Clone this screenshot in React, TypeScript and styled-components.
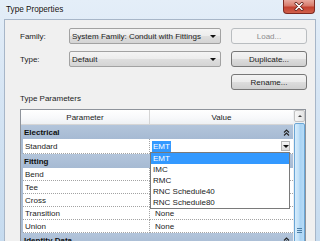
import styled, { createGlobalStyle } from 'styled-components';

const GlobalStyle = createGlobalStyle`
  html, body {
    margin: 0;
    padding: 0;
    background: #ffffff;
  }
  body {
    font-family: "Liberation Sans", Arial, sans-serif;
    font-size: 8px;
    color: #1b1b1b;
  }
`;

const Window = styled.div`
  width: 320px;
  height: 241px;
  overflow: hidden;
  display: flex;
  flex-direction: column;
  background: linear-gradient(180deg, #e4eef8 0%, #d6e5f4 40%, #c6dbef 100%);
`;

const TitleBar = styled.div`
  height: 19px;
  flex: none;
  display: flex;
  align-items: flex-start;
`;

const Title = styled.div`
  padding: 5px 0 0 6px;
  font-size: 8.2px;
  color: #111;
  text-shadow: 0 0 3px #fff;
  flex: 1;
`;

const CloseButton = styled.div`
  width: 32px;
  height: 14px;
  margin-right: 5px;
  box-sizing: border-box;
  border: 1px solid #7d2a22;
  border-top: none;
  border-radius: 0 0 4px 4px;
  background: linear-gradient(180deg, #e8a99e 0%, #d77a6b 45%, #c3402f 55%, #d0614c 100%);
  display: flex;
  align-items: center;
  justify-content: center;
`;

const Panel = styled.div`
  flex: 1;
  margin: 0 4px;
  border: 1px solid #a7b6c8;
  border-bottom: none;
  background: #f0f0f0;
  padding: 8px 8px 0 15px;
  display: flex;
  flex-direction: column;
`;

const FormGrid = styled.div`
  display: grid;
  grid-template-columns: 49px 152px 1fr;
  grid-auto-rows: 16px;
  row-gap: 7px;
  align-items: center;
`;

const Label = styled.div`
  padding-top: 1px;
`;

const Combo = styled.div`
  height: 16px;
  box-sizing: border-box;
  border: 1px solid #a2a2a2;
  border-radius: 2px;
  background: linear-gradient(180deg, #f4f4f4 0%, #ececec 50%, #dedede 51%, #d4d4d4 100%);
  display: flex;
  align-items: center;
  padding: 0 4px 0 2px;
`;

const ComboText = styled.span`
  flex: 1;
  white-space: nowrap;
  overflow: hidden;
`;

const Arrow = styled.span`
  width: 0;
  height: 0;
  border-left: 3px solid transparent;
  border-right: 3px solid transparent;
  border-top: 3px solid #111;
`;

const Button = styled.div<{ $disabled?: boolean }>`
  grid-column: 3;
  justify-self: end;
  width: 76px;
  height: 16px;
  box-sizing: border-box;
  border: 1px solid ${(p) => (p.$disabled ? '#b9bdc0' : '#777')};
  border-radius: 3px;
  background: ${(p) =>
    p.$disabled
      ? '#f4f4f4'
      : 'linear-gradient(180deg, #f3f3f3 0%, #ebebeb 50%, #dddddd 51%, #cfcfcf 100%)'};
  color: ${(p) => (p.$disabled ? '#8d8d8d' : '#1b1b1b')};
  display: flex;
  align-items: center;
  justify-content: center;
`;

const SectionTitle = styled.div`
  margin: 4px 0 5px;
  height: 10px;
  line-height: 10px;
`;

const Table = styled.div`
  width: 286px;
  box-sizing: border-box;
  border: 1px solid #8e939b;
  border-bottom: none;
  background: #fff;
  display: flex;
  flex: 1;
`;

const GridBody = styled.div`
  width: 272px;
  display: flex;
  flex-direction: column;
`;

const HeaderRow = styled.div`
  display: grid;
  grid-template-columns: 129px 143px;
  height: 14px;
  border-bottom: 1px solid #d5d5d5;
  background: linear-gradient(180deg, #ffffff 0%, #f7f8fa 60%, #eef0f3 100%);
`;

const HeaderCell = styled.div<{ $divider?: boolean }>`
  display: flex;
  align-items: center;
  justify-content: center;
  border-right: ${(p) => (p.$divider ? '1px solid #d5d5d5' : 'none')};
`;

const GroupRow = styled.div`
  height: 14px;
  flex: none;
  display: flex;
  align-items: center;
  padding: 0 3px 0 3px;
  background: linear-gradient(180deg, #b3c5db 0%, #a6bad3 100%);
  font-weight: bold;
  color: #0f0f0f;
  justify-content: space-between;
`;

const PropRow = styled.div<{ $tall?: boolean }>`
  height: ${(p) => (p.$tall ? 15 : 13)}px;
  flex: none;
  display: grid;
  grid-template-columns: 2px 127px 143px;
  box-sizing: border-box;
`;

const Gutter = styled.div`
  background: #a9bcd4;
`;

const NameCell = styled.div`
  border-right: 1px dotted #a3a3a3;
  border-bottom: 1px dotted #a3a3a3;
  display: flex;
  align-items: center;
  padding-left: 2px;
`;

const ValueCell = styled.div`
  position: relative;
  border-bottom: 1px dotted #a3a3a3;
  display: flex;
  align-items: center;
  padding-left: 5px;
`;

const EditValue = styled.div`
  position: relative;
  border-bottom: 1px dotted #a3a3a3;
  display: flex;
  align-items: center;
  padding: 0 3px 0 2px;
`;

const Selected = styled.span`
  background: #3399ff;
  color: #fff;
  padding: 1px 1px;
  flex: none;
`;

const Spacer = styled.span`
  flex: 1;
`;

const DropButton = styled.div`
  width: 9px;
  height: 10px;
  box-sizing: border-box;
  border: 1px solid #b5b5b5;
  background: linear-gradient(180deg, #f5f5f5, #dcdcdc);
  display: flex;
  align-items: center;
  justify-content: center;
`;

const DropList = styled.div`
  position: absolute;
  left: 0;
  top: 13px;
  width: 140px;
  box-sizing: border-box;
  border: 1px solid #7a7a7a;
  background: #fff;
  z-index: 5;
`;

const DropItem = styled.div<{ $active?: boolean }>`
  height: 11px;
  line-height: 11px;
  padding-left: 2px;
  background: ${(p) => (p.$active ? '#3399ff' : 'transparent')};
  color: ${(p) => (p.$active ? '#fff' : '#1b1b1b')};
`;

const ScrollBar = styled.div`
  width: 12px;
  display: flex;
  flex-direction: column;
  background: #eef0f2;
  padding-left: 1px;
  box-sizing: border-box;
`;

const ScrollUp = styled.div`
  height: 12px;
  flex: none;
  box-sizing: border-box;
  border: 1px solid #c3c3c3;
  border-radius: 2px;
  background: linear-gradient(90deg, #f7f7f7, #e4e4e4);
  display: flex;
  align-items: center;
  justify-content: center;
`;

const UpArrow = styled.span`
  width: 0;
  height: 0;
  border-left: 2px solid transparent;
  border-right: 2px solid transparent;
  border-bottom: 2px solid #444;
`;

const Thumb = styled.div`
  flex: 1;
  margin-top: 1px;
  box-sizing: border-box;
  border: 1px solid #6aa6d6;
  border-radius: 2px;
  background: linear-gradient(90deg, #d7ecfb 0%, #bfe0f8 45%, #a9d3f4 55%, #b6dbf7 100%);
  padding-top: 104px;
  display: flex;
  flex-direction: column;
  align-items: center;
  gap: 1px;
`;

const Grip = styled.div`
  width: 5px;
  height: 1px;
  background: #4d7fa6;
`;

const CollapseIcon = () => (
  <svg width="7" height="7" viewBox="0 0 7 7">
    <path d="M1 3.5 L3.5 1 L6 3.5 M1 6.5 L3.5 4 L6 6.5" stroke="#222" strokeWidth="1.1" fill="none" />
  </svg>
);

const CloseX = () => (
  <svg width="10" height="9" viewBox="0 0 10 9">
    <path d="M2 1.5 L8 7.5 M8 1.5 L2 7.5" stroke="#5a1710" strokeWidth="3" strokeLinecap="round" />
    <path d="M2 1.5 L8 7.5 M8 1.5 L2 7.5" stroke="#fff" strokeWidth="1.6" strokeLinecap="round" />
  </svg>
);

const fittings = ['Bend', 'Tee', 'Cross', 'Transition', 'Union'];
const fittingValues: Record<string, string> = { Transition: 'None', Union: 'None' };
const options = ['EMT', 'IMC', 'RMC', 'RNC Schedule40', 'RNC Schedule80'];

const App = () => {
  return (
    <>
      <GlobalStyle />
      <Window>
        <TitleBar>
          <Title>Type Properties</Title>
          <CloseButton>
            <CloseX />
          </CloseButton>
        </TitleBar>

        <Panel>
          <FormGrid>
            <Label>Family:</Label>
            <Combo>
              <ComboText>System Family: Conduit with Fittings</ComboText>
              <Arrow />
            </Combo>
            <Button $disabled>Load...</Button>

            <Label>Type:</Label>
            <Combo>
              <ComboText>Default</ComboText>
              <Arrow />
            </Combo>
            <Button>Duplicate...</Button>

            <Button>Rename...</Button>
          </FormGrid>

          <SectionTitle>Type Parameters</SectionTitle>

          <Table>
            <GridBody>
              <HeaderRow>
                <HeaderCell $divider>Parameter</HeaderCell>
                <HeaderCell>Value</HeaderCell>
              </HeaderRow>

              <GroupRow>
                <span>Electrical</span>
                <CollapseIcon />
              </GroupRow>
              <PropRow $tall>
                <Gutter />
                <NameCell>Standard</NameCell>
                <EditValue>
                  <Selected>EMT</Selected>
                  <Spacer />
                  <DropButton>
                    <Arrow />
                  </DropButton>
                  <DropList>
                    {options.map((o, i) => (
                      <DropItem key={o} $active={i === 0}>
                        {o}
                      </DropItem>
                    ))}
                  </DropList>
                </EditValue>
              </PropRow>

              <GroupRow>
                <span>Fitting</span>
              </GroupRow>
              {fittings.map((f) => (
                <PropRow key={f}>
                  <Gutter />
                  <NameCell>{f}</NameCell>
                  <ValueCell>{fittingValues[f] || ''}</ValueCell>
                </PropRow>
              ))}

              <GroupRow>
                <span>Identity Data</span>
                <CollapseIcon />
              </GroupRow>
            </GridBody>
            <ScrollBar>
              <ScrollUp>
                <UpArrow />
              </ScrollUp>
              <Thumb>
                <Grip />
                <Grip />
                <Grip />
              </Thumb>
            </ScrollBar>
          </Table>
        </Panel>
      </Window>
    </>
  );
};

export default App;
